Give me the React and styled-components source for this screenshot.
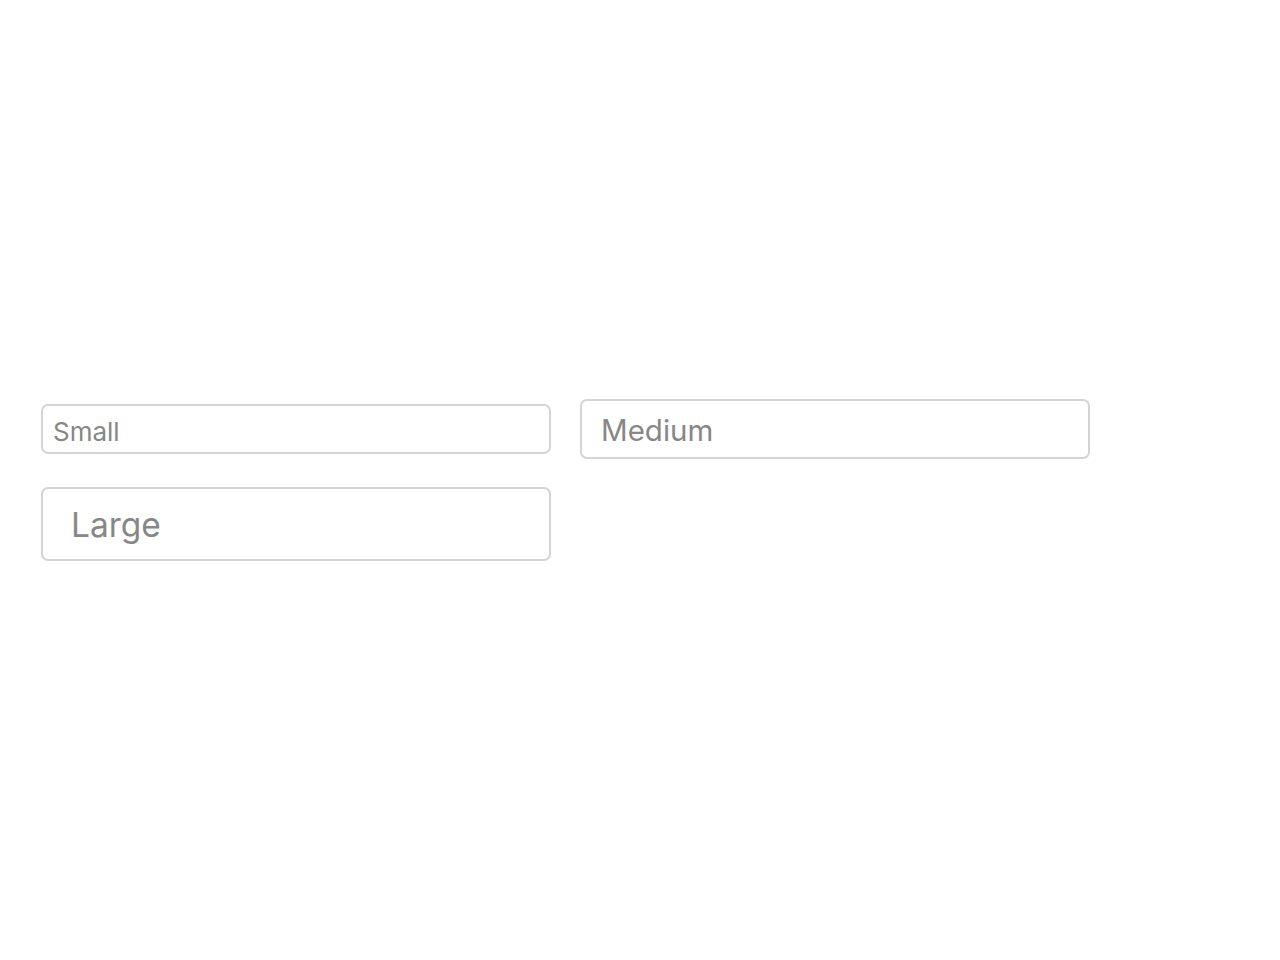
import React from "react";
import styled, { createGlobalStyle, css } from "styled-components";

const Global = createGlobalStyle`
  html, body { margin: 0; padding: 0; background: #ffffff; }
  body { font-family: Inter, "Noto Sans", Arial, sans-serif; }
`;

const Page = styled.div`
  min-height: 960px;
  box-sizing: border-box;
  padding: 0 41px;
  display: flex;
  flex-wrap: wrap;
  align-content: center;
  align-items: center;
  column-gap: 29px;
  row-gap: 28px;
`;

const sizes = {
  small: css`
    height: 50px;
    font-size: 26px;
    padding: 0 10px;
    padding-top: 4px;
  `,
  medium: css`
    height: 60px;
    font-size: 29.5px;
    padding: 0 19px;
    padding-top: 1px;
  `,
  large: css`
    height: 74px;
    font-size: 33.5px;
    padding: 0 28px;
    padding-top: 2px;
  `,
};

const Field = styled.input`
  box-sizing: border-box;
  width: 510px;
  margin: 0;
  border: 2px solid #d4d4d4;
  border-radius: 7px;
  background: #ffffff;
  color: #333333;
  font-family: Inter, "Noto Sans", Arial, sans-serif;
  outline: none;
  ${(p) => sizes[p.$size]}
  &::placeholder {
    color: #878787;
    opacity: 1;
  }
`;

export default function App() {
  return (
    <>
      <Global />
      <Page>
        <Field $size="small" placeholder="Small" />
        <Field $size="medium" placeholder="Medium" />
        <Field $size="large" placeholder="Large" />
      </Page>
    </>
  );
}
